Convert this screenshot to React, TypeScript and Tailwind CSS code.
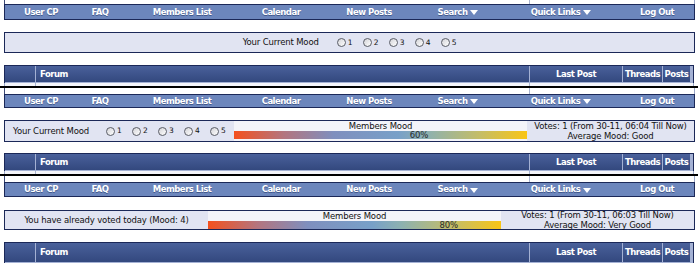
import React from 'react';

const navItems = [
  { label: 'User CP', w: 'w-[72px]' },
  { label: 'FAQ', w: 'w-[46px]' },
  { label: 'Members List', w: 'w-[118px]' },
  { label: 'Calendar', w: 'w-[80px]' },
  { label: 'New Posts', w: 'w-[96px]' },
  { label: 'Search', w: 'w-[82px]', menu: true },
  { label: 'Quick Links', w: 'w-[124px]', menu: true },
  { label: 'Log Out', w: 'w-[68px]' },
];

function Caret() {
  return (
    <svg width="8" height="5" viewBox="0 0 8 5" className="ml-[3px] mt-px">
      <path d="M0 0h8L4 5z" fill="#ffffff" />
    </svg>
  );
}

function TopStrip({ h }: { h: string }) {
  return (
    <div className={`ml-[4px] w-[691px] ${h} flex border-l border-l-[#3c4a78] border-r border-r-[#9aa7c8] bg-white`}>
      <div className="w-[525px] border-r border-[#a9b4d0]" />
    </div>
  );
}

function Navbar({ h }: { h: string }) {
  return (
    <div className={`ml-[4px] w-[691px] ${h} flex items-center border border-[#1b2858] bg-[#6c86bc] text-white font-bold text-[8.5px] tracking-[-0.5px] [text-shadow:0_1px_0_#42598c]`}>
      {navItems.map((n) => (
        <div key={n.label} className={`${n.w} flex items-center justify-center`}>
          {n.label}
          {n.menu && <Caret />}
        </div>
      ))}
    </div>
  );
}

function ForumHeader({ h }: { h: string }) {
  const cell = 'h-full flex items-center bg-gradient-to-b from-[#4a619b] to-[#33487e]';
  return (
    <div className={`ml-[4px] w-[690px] ${h} flex gap-px border-x border-t border-[#1b2858] bg-[#a4b1d4] pb-px text-white font-bold text-[8.5px] tracking-[-0.5px]`}>
      <div className={`${cell} w-[30px]`} />
      <div className={`${cell} w-[493px] pl-[4px]`}>Forum</div>
      <div className={`${cell} w-[92px] justify-center`}>Last Post</div>
      <div className={`${cell} w-[39px] justify-center`}>Threads</div>
      <div className={`${cell} w-[27px] justify-center`}>Posts</div>
    </div>
  );
}

function RowStrip() {
  return (
    <div className="ml-[4px] w-[690px] h-[3px] flex border-x border-[#9aa7c8] bg-[#f4f5fa]">
      <div className="w-[31px] border-r border-[#a9b4d0]" />
      <div className="w-[494px] border-r border-[#a9b4d0]" />
    </div>
  );
}

function Radio({ n, last }: { n: number; last?: boolean }) {
  return (
    <span className={`flex items-center ${last ? '' : 'w-[26px]'}`}>
      <span className="w-[9px] h-[9px] rounded-full border border-[#5a5d66] bg-gradient-to-br from-[#d4d4d8] to-white" />
      <span className="ml-[2px] text-[7.5px]">{n}</span>
    </span>
  );
}

function Radios() {
  return (
    <span className="flex items-center">
      {[1, 2, 3, 4].map((n) => (
        <Radio key={n} n={n} />
      ))}
      <Radio n={5} last />
    </span>
  );
}

function MoodBar({ pct, label }: { pct: number; label: string }) {
  return (
    <div className="relative h-[8px] w-full bg-[linear-gradient(to_right,#f4511e_0%,#b3757f_17%,#7f8fbe_34%,#78a0c8_56%,#8db1b0_66%,#c5bd66_84%,#f9c516_100%)]">
      <span
        className="absolute top-[-1px] text-[8.5px] leading-[10px] text-[#2a2a2a]"
        style={{ left: `${pct}%` }}
      >
        {label}
      </span>
    </div>
  );
}

function Votes({ from, mood }: { from: string; mood: string }) {
  return (
    <div className="flex-1 h-full flex flex-col items-center justify-center leading-[10px]">
      <span>Votes: 1 (From {from} Till Now)</span>
      <span>Average Mood: {mood}</span>
    </div>
  );
}

export default function App() {
  return (
    <div className="w-[700px] h-[263px] overflow-hidden bg-white text-[#111] text-[8.5px] tracking-[-0.15px] font-['DejaVu_Sans',sans-serif]">
      {/* first shot: mood form only */}
      <TopStrip h="h-[4px]" />
      <Navbar h="h-[16px]" />
      <div className="ml-[4px] mt-[12px] w-[691px] h-[21px] flex items-center justify-center border border-[#1b2858] bg-[#e1e4f2]">
        <span className="mr-[18px]">Your Current Mood</span>
        <Radios />
      </div>
      <div className="mt-[12px]">
        <ForumHeader h="h-[18px]" />
      </div>
      <RowStrip />
      <div className="h-[2px] w-[698px] bg-black" />

      {/* second shot: form + members mood */}
      <TopStrip h="h-[6px]" />
      <Navbar h="h-[14px]" />
      <div className="ml-[4px] mt-[12px] w-[691px] h-[22px] flex border border-[#1b2858] bg-[#e1e4f2]">
        <div className="w-[229px] h-full flex items-center pl-[8px]">
          <span className="mr-[17px]">Your Current Mood</span>
          <Radios />
        </div>
        <div className="w-[293px] h-full flex flex-col bg-[#f3f4f9]">
          <div className="h-[10px] flex items-center justify-center">Members Mood</div>
          <MoodBar pct={60} label="60%" />
        </div>
        <Votes from="30-11, 06:04" mood="Good" />
      </div>
      <div className="mt-[11px]">
        <ForumHeader h="h-[18px]" />
      </div>
      <RowStrip />
      <div className="h-[2px] w-[698px] bg-black" />

      {/* third shot: already voted */}
      <TopStrip h="h-[6px]" />
      <Navbar h="h-[15px]" />
      <div className="ml-[4px] mt-[13px] w-[691px] h-[20px] flex border border-[#1b2858] bg-[#e1e4f2]">
        <div className="w-[203px] h-full flex items-center justify-center">
          You have already voted today (Mood: 4)
        </div>
        <div className="w-[293px] h-full flex flex-col bg-[#f3f4f9]">
          <div className="h-[10px] flex items-center justify-center">Members Mood</div>
          <MoodBar pct={79} label="80%" />
        </div>
        <Votes from="30-11, 06:03" mood="Very Good" />
      </div>
      <div className="mt-[12px]">
        <ForumHeader h="h-[21px]" />
      </div>
    </div>
  );
}
